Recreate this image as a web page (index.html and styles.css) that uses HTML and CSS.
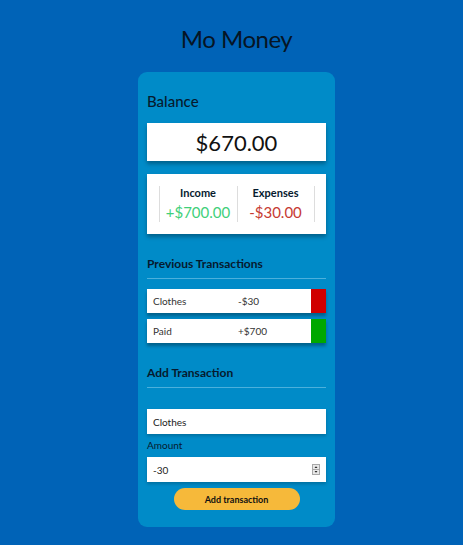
FILE: index.html
```html
<!DOCTYPE html>
<html>
<head>
<meta charset="utf-8">
<link rel="stylesheet" href="styles.css">
</head>
<body>
<h1 class="title">Mo Money</h1>
<div class="card">
  <h2 class="balance-label">Balance</h2>
  <div class="balance-box">$670.00</div>
  <div class="inc-exp">
    <div class="col">
      <div class="col-label">Income</div>
      <div class="money plus">+$700.00</div>
    </div>
    <div class="col">
      <div class="col-label">Expenses</div>
      <div class="money minus">-$30.00</div>
    </div>
  </div>
  <h3 class="section">Previous Transactions</h3>
  <ul class="list">
    <li class="item red"><span class="name">Clothes</span><span class="amt">-$30</span></li>
    <li class="item green"><span class="name">Paid</span><span class="amt">+$700</span></li>
  </ul>
  <h3 class="section add">Add Transaction</h3>
  <form class="form">
    <input class="field" type="text" value="Clothes">
    <label class="label">Amount</label>
    <div class="num-wrap">
      <input class="field num" type="number" value="-30">
      <svg class="spin" width="8" height="11" viewBox="0 0 8 11">
        <rect x="0.5" y="0.5" width="7" height="10" fill="#e8e8e8" stroke="#a8a8a8"/>
        <line x1="1" y1="5.5" x2="7" y2="5.5" stroke="#a8a8a8"/>
        <path d="M2.5 4 L4 2.3 L5.5 4 Z" fill="#222"/>
        <path d="M2.5 7 L4 8.7 L5.5 7 Z" fill="#222"/>
      </svg>
    </div>
    <button class="btn" type="button">Add transaction</button>
  </form>
</div>
</body>
</html>
```
FILE: styles.css
```css
* { box-sizing: border-box; }
body {
  margin: 0;
  padding-left: 10px;
  background: #0063b7;
  font-family: "Lato", "Noto Sans", sans-serif;
  color: #061a2e;
  display: flex;
  flex-direction: column;
  align-items: center;
  min-height: 545px;
}
.title {
  margin: 25px 0 19px;
  font-size: 24px;
  font-weight: 400;
  line-height: 28px;
  color: #061525;
  letter-spacing: -0.5px;
}
.card {
  width: 197px;
  background: #008bc8;
  border-radius: 9px;
  padding: 20px 9px 17px;
}
.balance-label {
  margin: 0 0 13px;
  font-size: 15px;
  font-weight: 500;
  line-height: 18px;
}
.balance-box {
  background: #fff;
  height: 38px;
  display: flex;
  align-items: center;
  justify-content: center;
  font-size: 22px;
  color: #111;
  box-shadow: 0 3px 4px rgba(0,0,0,0.3);
}
.inc-exp {
  margin-top: 13px;
  background: #fff;
  height: 60px;
  display: flex;
  justify-content: center;
  align-items: center;
  box-shadow: 0 3px 4px rgba(0,0,0,0.3);
}
.col {
  width: 78px;
  height: 36px;
  border-left: 1px solid #ddd;
  text-align: center;
}
.col:last-child { border-right: 1px solid #ddd; }
.col-label {
  font-size: 11px;
  font-weight: 700;
  line-height: 14px;
}
.money {
  font-size: 15px;
  line-height: 20px;
  margin-top: 2px;
}
.plus { color: #3fd07a; }
.minus { color: #c63a32; }
.section {
  margin: 22px 0 0;
  font-size: 12px;
  font-weight: 700;
  line-height: 16px;
  padding-bottom: 6px;
  border-bottom: 1px solid #4cb0dc;
}
.list {
  list-style: none;
  margin: 10px 0 0;
  padding: 0;
}
.item {
  background: #fff;
  height: 24px;
  display: flex;
  align-items: center;
  padding-left: 6px;
  font-size: 10px;
  color: #333;
  margin-bottom: 6px;
  border-right: 15px solid #d00000;
  box-shadow: 0 3px 3px rgba(0,0,0,0.3);
}
.item.green { border-right-color: #00a800; }
.name { width: 85px; }
.section.add { margin-top: 22px; }
.form {
  display: flex;
  flex-direction: column;
  margin-top: 21px;
}
.field {
  width: 100%;
  height: 25px;
  border: none;
  padding: 0 6px;
  font-family: inherit;
  font-size: 10px;
  color: #222;
  background: #fff;
  box-shadow: 0 2px 3px rgba(0,0,0,0.2);
  outline: none;
}
.num::-webkit-inner-spin-button,
.num::-webkit-outer-spin-button { -webkit-appearance: none; margin: 0; }
.num-wrap { position: relative; }
.spin {
  position: absolute;
  right: 6px;
  top: 7px;
}
.label {
  font-size: 10px;
  margin: 5px 0 6px;
  line-height: 12px;
}
.btn {
  align-self: center;
  margin-top: 6px;
  width: 126px;
  height: 22px;
  border: none;
  border-radius: 11px;
  background: #f6b93a;
  font-family: inherit;
  font-weight: 700;
  font-size: 9px;
  color: #111;
}
```
